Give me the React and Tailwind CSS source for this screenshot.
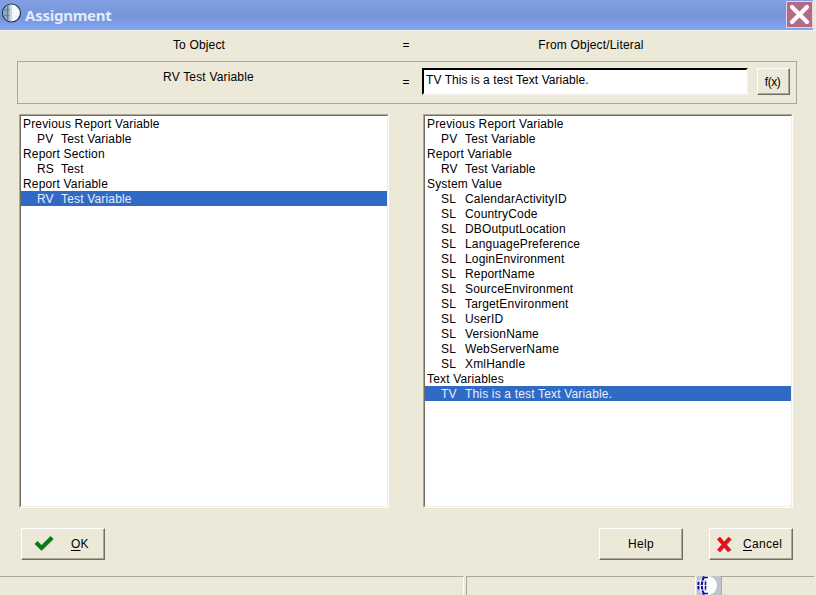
import React, { useState } from 'react';

const targets = [
  { label: 'Previous Report Variable' },
  { code: 'PV', label: 'Test Variable' },
  { label: 'Report Section' },
  { code: 'RS', label: 'Test' },
  { label: 'Report Variable' },
  { code: 'RV', label: 'Test Variable' },
];

const sources = [
  { label: 'Previous Report Variable' },
  { code: 'PV', label: 'Test Variable' },
  { label: 'Report Variable' },
  { code: 'RV', label: 'Test Variable' },
  { label: 'System Value' },
  { code: 'SL', label: 'CalendarActivityID' },
  { code: 'SL', label: 'CountryCode' },
  { code: 'SL', label: 'DBOutputLocation' },
  { code: 'SL', label: 'LanguagePreference' },
  { code: 'SL', label: 'LoginEnvironment' },
  { code: 'SL', label: 'ReportName' },
  { code: 'SL', label: 'SourceEnvironment' },
  { code: 'SL', label: 'TargetEnvironment' },
  { code: 'SL', label: 'UserID' },
  { code: 'SL', label: 'VersionName' },
  { code: 'SL', label: 'WebServerName' },
  { code: 'SL', label: 'XmlHandle' },
  { label: 'Text Variables' },
  { code: 'TV', label: 'This is a test Text Variable.' },
];

const ListBox = ({ items, selected, onSelect }) => (
  <div className="h-[394px] w-[370px] border border-t-[#aca899] border-l-[#aca899] border-r-white border-b-white bg-white">
    <div className="h-full border border-t-[#716f64] border-l-[#716f64] border-r-[#f1efe2] border-b-[#f1efe2]">
      {items.map((item, i) => (
        <div
          key={i}
          onClick={() => item.code && onSelect(i)}
          className={`flex h-[15px] items-start whitespace-nowrap pt-px leading-[15px] ${
            item.code ? 'pl-4' : 'pl-0.5'
          } ${i === selected ? 'bg-[#316ac5] text-[#e4f0ff]' : ''}`}
        >
          {item.code && <span className="w-6 shrink-0">{item.code}</span>}
          <span>{item.label}</span>
        </div>
      ))}
    </div>
  </div>
);

const PushButton = ({ className, children }) => (
  <button
    className={`flex items-center border border-t-white border-l-white border-r-[#716f64] border-b-[#716f64] bg-[#ece9d8] shadow-[inset_-1px_-1px_0_#aca899] ${className}`}
  >
    {children}
  </button>
);

const TitleIcon = () => (
  <svg width="20" height="20" viewBox="0 0 20 20" className="ml-0.5 mt-[3px] shrink-0">
    <circle cx="9.5" cy="10" r="9" fill="#f7fafc" stroke="#1c2c50" strokeWidth="1.2" />
    <path d="M9.5 1.6a8.4 8.4 0 0 0 0 16.8z" fill="#8fa9b8" />
    <path d="M7.5 2h2v16h-2z" fill="#c4dadd" />
    <path d="M1.5 7h6M1.5 12.5h6M5.5 2.5v15" stroke="#5c7b8c" strokeWidth="0.9" />
  </svg>
);

const StatusGlobe = () => (
  <svg width="26" height="19" viewBox="0 0 26 19" className="block">
    <rect width="26" height="19" fill="#c3c3cb" />
    <rect width="1.5" height="19" fill="#fff" />
    <circle cx="12.5" cy="9.5" r="9.5" fill="#fff" />
    <g fill="none" stroke="#1010a0">
      <path d="M3.5 5.5v9" strokeWidth="2" />
      <path d="M9 .5Q4.500 9.500 9 18.500" strokeWidth="2.200" />
      <path d="M10.500 4.500v10" strokeWidth="1.600" />
      <path d="M9 1.500h4M9 17.500h4" strokeWidth="1.500" />
    </g>
    <path d="M2 5h10M2 9.500h10M2 14h10" stroke="#e6e6f6" strokeWidth="1" />
  </svg>
);

const App = () => {
  const [target, setTarget] = useState(5);
  const [source, setSource] = useState(18);

  return (
    <div className="flex h-[595px] w-[816px] flex-col overflow-hidden bg-[#ece9d8] font-['Liberation_Sans',Arial,sans-serif] text-[12px] tracking-[0.17px] text-black">
      <header className="flex h-[31px] shrink-0 border-b border-[#f5f4ee]">
        <div className="flex w-[813px] bg-linear-to-b from-[#819fe2] from-0% via-[#7795da] via-55% to-[#82a5f1]">
          <TitleIcon />
          <h1 className="ml-[3px] mt-[4px] font-['Noto_Sans',sans-serif] text-[15px] font-bold leading-[22px] tracking-[-0.25px] text-[#e0ecff]">
            Assignment
          </h1>
          <button className="ml-auto mt-px flex h-[27px] w-[27px] items-center justify-center border border-[#e2d5ec] bg-[#b46a85]" aria-label="Close">
            <svg width="23" height="23" viewBox="0 0 23 23">
              <path d="M4 4l15 15M19 4L4 19" stroke="#fff" strokeWidth="4.2" strokeLinecap="round" />
            </svg>
          </button>
        </div>
      </header>

      <div className="flex h-[30px] shrink-0 items-start pl-[17px] pt-[7px] leading-[14px]">
        <span className="w-[364px] text-center">To Object</span>
        <span className="w-[50px] text-center">=</span>
        <span className="w-[320px] text-center">From Object/Literal</span>
      </div>

      <section className="ml-[17px] flex h-[43px] w-[780px] shrink-0 border border-[#aca899]">
        <div className="w-[381px] pt-2 text-center leading-[14px]">RV Test Variable</div>
        <div className="w-[14px] pt-[13px] text-center leading-[14px]">=</div>
        <input
          readOnly
          value="TV This is a test Text Variable."
          className="ml-[9px] mt-[6px] h-[27px] w-[326px] border-2 border-t-black border-l-black border-r-[#f8f6ee] border-b-[#f8f6ee] bg-white pb-[3px] pl-0.5 tracking-[0.06px] outline-none"
        />
        <PushButton className="ml-[9px] mt-[6px] h-[27px] w-[33px] justify-center pt-px pr-0.5 tracking-[-0.5px]">f(x)</PushButton>
      </section>

      <main className="mt-[10px] flex shrink-0 gap-[34px] pl-[19px]">
        <ListBox items={targets} selected={target} onSelect={setTarget} />
        <ListBox items={sources} selected={source} onSelect={setSource} />
      </main>

      <div className="mt-5 flex h-8 shrink-0 pl-[21px]">
        <PushButton className="w-[84px]">
          <svg width="21" height="18" viewBox="0 0 21 18" className="ml-3">
            <path d="M3 9l5 5L19 3.5" fill="none" stroke="#b9cfb4" strokeWidth="3" />
            <path d="M2 7.5l5.5 5.5L18 2.5" fill="none" stroke="#087a16" strokeWidth="4" />
          </svg>
          <span className="ml-4"><u className="underline-offset-2">O</u>K</span>
        </PushButton>
        <PushButton className="ml-[494px] w-[84px] justify-center tracking-[0.3px]">Help</PushButton>
        <PushButton className="ml-[26px] w-[84px] tracking-[0.3px]">
          <svg width="17" height="17" viewBox="0 0 17 17" className="ml-1.5">
            <path d="M4 3l11 12M15 3L4 15" stroke="#c5bcae" strokeWidth="3" />
            <path d="M2.5 2l11 13M14 2l-11.5 13" stroke="#e5101c" strokeWidth="4" />
          </svg>
          <span className="ml-2.5"><u className="underline-offset-2">C</u>ancel</span>
        </PushButton>
      </div>

      <footer className="mt-4 flex h-[19px] shrink-0">
        <div className="w-[464px] border-t border-r border-t-[#aca899] border-r-white" />
        <div className="ml-0.5 w-[229px] border-t border-l border-[#aca899]" />
        <StatusGlobe />
        <div className="w-[93px] border-t border-l border-[#aca899]" />
      </footer>
    </div>
  );
};

export default App;
